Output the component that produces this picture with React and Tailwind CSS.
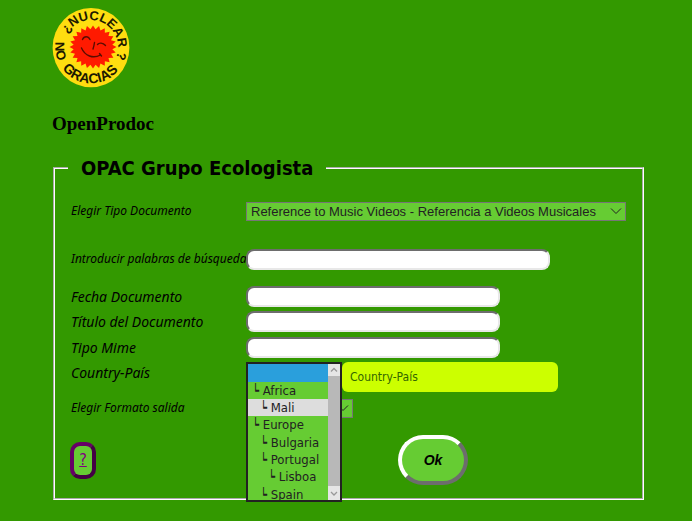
import React from "react";

const sunPoints = Array.from({ length: 48 }, (_, i) => {
  const a = (i / 48) * Math.PI * 2;
  const r = i % 2 === 0 ? 23.5 : 19.5;
  return `${(41 + r * Math.cos(a)).toFixed(2)},${(39 + r * 0.92 * Math.sin(a)).toFixed(2)}`;
}).join(" ");

function Logo() {
  return (
    <svg width="78" height="80" viewBox="0 0 78 80" role="img" aria-label="¿Nuclear? No gracias">
      <defs>
        <path id="arcTop" d="M 12 39.5 A 27 27.5 0 0 1 66 39.5 A 27 27.5 0 0 1 39 67" />
        <path id="arcBottom" d="M 3.6 33 A 35.8 36.8 0 1 0 74.4 33" />
      </defs>
      <ellipse cx="39" cy="39.7" rx="38.4" ry="39.6" fill="#ffdd10" />
      <polygon points={sunPoints} fill="#ff1a00" />
      <g fill="none" stroke="#5a0d00" strokeWidth="1.4" strokeLinecap="round">
        <path d="M30.5 31.5 C32 28 36 27.5 38 31.5" />
        <path d="M45.5 36.5 C47 34.5 51 34.5 53.5 37.5" />
        <path d="M42.5 34.5 Q42 38 41 41" />
        <path d="M29.5 40 C33 48 41 51 48.5 47 M47.5 45.5 L49.5 48" />
      </g>
      <g fontFamily="'Liberation Sans', Arial, sans-serif" fontWeight="700" fill="#1c1800">
        <text fontSize="13"><textPath href="#arcTop" startOffset="14">¿NUCLEAR ?</textPath></text>
        <text fontSize="13"><textPath href="#arcBottom" startOffset="1">NO</textPath></text>
        <text fontSize="14"><textPath href="#arcBottom" startOffset="29">GRACIAS</textPath></text>
      </g>
    </svg>
  );
}

function Chevron() {
  return (
    <svg className="pointer-events-none absolute right-1 top-1/2 -translate-y-1/2" width="12" height="8" viewBox="0 0 12 8" fill="none" stroke="#222" aria-hidden="true">
      <path d="M1 1.5 L6 6.5 L11 1.5" />
    </svg>
  );
}

const selectClass =
  "block h-[19px] w-full appearance-none border border-[#767676] bg-[#66cc33] pl-1 text-[13px] leading-[17px] text-[#222] font-['Liberation_Sans',Arial,sans-serif]";
const inputClass =
  "block h-[21px] rounded-lg border-2 border-t-[#6d6d6d] border-l-[#6d6d6d] border-r-[#e8e8e8] border-b-[#e8e8e8] bg-white px-1 text-sm";

const countries = [
  { name: "Africa", cls: "h-[17px] pl-[4px]" },
  { name: "Mali", cls: "h-[17px] pl-[12px] bg-[#dddddd]" },
  { name: "Europe", cls: "h-[18px] pl-[4px]" },
  { name: "Bulgaria", cls: "h-[17px] pl-[12px]" },
  { name: "Portugal", cls: "h-[17px] pl-[12px]" },
  { name: "Lisboa", cls: "h-[18px] pl-[20px]" },
  { name: "Spain", cls: "h-[17px] pl-[12px]" },
];

function CountryList() {
  return (
    <div className="absolute left-0 top-0 z-10 flex h-[140px] w-24 border-2 border-[#222] bg-[#66cc33]">
      <select id="country" size={8} className="h-full min-w-0 flex-1 overflow-hidden bg-[#66cc33] p-0 text-[13px] leading-[17px] text-[#222] outline-none">
        <option value="" aria-label="Country-País" className="h-[18px] min-h-0 bg-[#2a9fdc] p-0" />
        {countries.map((c) => (
          <option key={c.name} value={c.name} className={`min-h-0 pt-px pr-0 pb-0 ${c.cls}`}>
            {"┕ " + c.name}
          </option>
        ))}
      </select>
      <div className="flex w-3 flex-col justify-between bg-[#b8b8b8]" aria-hidden="true">
        <svg width="12" height="12" viewBox="0 0 12 12" fill="none" stroke="#999" strokeWidth="1.3">
          <rect width="12" height="12" fill="#e6e6e6" stroke="none" />
          <path d="M3 7.5 L6 4.5 L9 7.5" />
        </svg>
        <svg width="12" height="14" viewBox="0 0 12 14" fill="none" stroke="#999" strokeWidth="1.3">
          <rect width="12" height="14" fill="#e6e6e6" stroke="none" />
          <path d="M3 6 L6 9 L9 6" />
        </svg>
      </div>
    </div>
  );
}

function Row({ label, id, small, className, children }) {
  return (
    <div className={`flex items-center ${className}`}>
      <label htmlFor={id} className={`w-[175px] shrink-0 whitespace-nowrap italic font-['Noto_Sans',sans-serif] ${small ? "text-[12px]" : "text-[14px]"}`}>
        {label}
      </label>
      {children}
    </div>
  );
}

export default function App() {
  return (
    <main className="min-h-screen bg-[#339900] pt-2 pr-12 pb-5 pl-[52px] text-black font-['DejaVu_Sans_Condensed','Noto_Sans',sans-serif]">
      <header>
        <Logo />
        <h3 className="mt-6 text-[19px] leading-6 font-bold font-['Liberation_Serif',serif]">OpenProdoc</h3>
      </header>
      <form onSubmit={(e) => e.preventDefault()}>
        <fieldset className="mt-[18px] ml-px border-2 border-white px-4 pb-[13px] [border-style:groove]">
          <legend className="-ml-[3px] px-[13px] text-[20px] leading-7 font-bold">OPAC Grupo Ecologista</legend>
          <Row label="Elegir Tipo Documento" id="docType" small className="mt-[17px] h-6">
            <div className="relative w-[380px]">
              <select id="docType" className={selectClass}>
                <option>Reference to Music Videos - Referencia a Videos Musicales</option>
              </select>
              <Chevron />
            </div>
          </Row>
          <Row label="Introducir palabras de búsqueda" id="words" small className="mt-6 h-6">
            <input id="words" type="text" className={`${inputClass} w-[304px]`} />
          </Row>
          <Row label="Fecha Documento" id="date" className="mt-[12px] h-[26px]">
            <input id="date" type="text" className={`${inputClass} w-[254px]`} />
          </Row>
          <Row label="Título del Documento" id="title" className="h-[25px]">
            <input id="title" type="text" className={`${inputClass} w-[254px]`} />
          </Row>
          <Row label="Tipo Mime" id="mime" className="h-[26px]">
            <input id="mime" type="text" className={`${inputClass} w-[254px]`} />
          </Row>
          <Row label="Country-País" id="country" className="mt-[2px] h-5">
            <div className="relative h-full flex-1">
              <CountryList />
              <div role="tooltip" className="absolute left-24 top-0 h-[30px] w-[216px] rounded-md bg-[#ccff00] px-2 text-[12px] leading-[30px] text-[#336600]">
                Country-País
              </div>
            </div>
          </Row>
          <Row label="Elegir Formato salida" id="format" small className="mt-[14px] h-6">
            <div className="relative w-[107px]">
              <select id="format" className={selectClass}>
                <option>HTML</option>
              </select>
              <Chevron />
            </div>
          </Row>
          <div className="mt-[15px] flex items-center">
            <a href="#help" className="-ml-px flex h-[37px] w-[26px] items-center justify-center rounded-[10px] border-4 border-t-[#660066] border-l-[#660066] border-r-[#440044] border-b-[#440044] bg-[#66cc33] text-[16px] text-[#800080] underline">
              ?
            </a>
            <button type="submit" className="ml-[302px] h-[50px] w-[70px] rounded-[25px] border-4 border-t-white border-l-white border-r-[#6d6d6d] border-b-[#6d6d6d] bg-[#66cc33] text-[14px] font-bold italic font-['Liberation_Sans',Arial,sans-serif]">
              Ok
            </button>
          </div>
        </fieldset>
      </form>
    </main>
  );
}
